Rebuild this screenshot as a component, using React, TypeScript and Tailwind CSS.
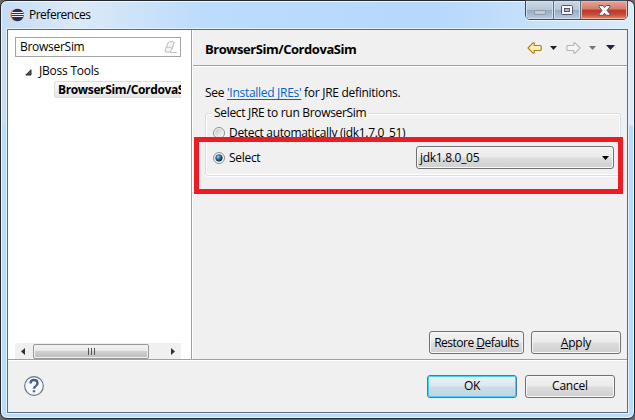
import React from "react";

function EclipseLogo() {
  return (
    <svg width="14" height="14" viewBox="0 0 14 14" className="shrink-0">
      <circle cx="6.5" cy="7" r="6.3" fill="#f59b2c" />
      <circle cx="7.6" cy="7" r="6.2" fill="#2f2a5c" />
      <path d="M2 4.5h11M1.5 6.5h12.5M2 8.5h11" stroke="#eeedf8" strokeWidth="1" />
    </svg>
  );
}

function BackArrow({ stroke, fill, flip }: { stroke: string; fill: string; flip?: boolean }) {
  return (
    <svg width="15" height="12" viewBox="0 0 15 12" className={flip ? "-scale-x-100" : ""}>
      <path d="M1 6 L6 .9 H7.2 V3.5 H13.2 L14.2 4.4 V7.7 L13.2 8.5 H7.2 V11.1 H6 Z" fill={fill} stroke={stroke} strokeWidth="1.1" strokeLinejoin="round" />
    </svg>
  );
}

function Caret({ color, big }: { color: string; big?: boolean }) {
  return big ? (
    <svg width="9" height="5" viewBox="0 0 9 5"><path d="M0 0h9L4.5 5z" fill={color} /></svg>
  ) : (
    <svg width="7" height="4" viewBox="0 0 7 4"><path d="M0 0h7L3.5 4z" fill={color} /></svg>
  );
}

function Radio({ checked }: { checked?: boolean }) {
  return (
    <svg width="12" height="12" viewBox="0 0 12 12" className="shrink-0">
      <defs>
        <linearGradient id="well" x1="0" y1="0" x2="1" y2="1">
          <stop offset="0" stopColor="#c4c8cc" />
          <stop offset="1" stopColor="#f8f8f8" />
        </linearGradient>
        <radialGradient id="dot" cx=".35" cy=".3" r=".7">
          <stop offset="0" stopColor="#a5e2f5" />
          <stop offset=".45" stopColor="#2687ae" />
          <stop offset="1" stopColor="#0b2849" />
        </radialGradient>
      </defs>
      <circle cx="6" cy="6" r="5.5" fill="#f4f4f4" stroke="#8e8f8f" />
      <circle cx="6" cy="6" r="3.9" fill="url(#well)" />
      {checked && <circle cx="6" cy="6" r="3.3" fill="url(#dot)" stroke="#16374f" strokeWidth=".6" />}
    </svg>
  );
}

function Button({ children, className, focus }: { children: React.ReactNode; className: string; focus?: boolean }) {
  const look = focus
    ? "border-[#3c7fb1] bg-[linear-gradient(#eaf2f6_0%,#dce8ee_48%,#cbdce5_52%,#c3d5df_100%)] shadow-[inset_0_0_0_1px_#48d0f8]"
    : "border-[#707070] bg-[linear-gradient(#f2f2f2_0%,#ebebeb_48%,#dddddd_52%,#cfcfcf_100%)] shadow-[inset_0_0_0_1px_#f8f8f8]";
  return (
    <button className={`flex h-[23px] items-center justify-center rounded-[3px] border whitespace-nowrap ${look} ${className}`}>
      <span>{children}</span>
    </button>
  );
}

function WindowControls() {
  return (
    <div className="mr-[6px] flex h-5 w-[103px] overflow-hidden rounded-b-[5px] border border-[#3f4b5c] shadow-[0_1px_0_#e9f5ff]">
      <div className="flex w-[28px] justify-center border-r border-[#5d6b7e] bg-[linear-gradient(#cbd7e5_0%,#b8c7d8_47%,#97a9bf_50%,#b6cce4_100%)] shadow-[inset_0_0_0_1px_#d4e0ed]">
        <div className="mt-[9px] h-[5px] w-3 rounded-[1px] border border-[#8e9baa] bg-[#c3ccd6]" />
      </div>
      <div className="flex w-[27px] justify-center border-r border-[#5d6b7e] bg-[linear-gradient(#cbd7e5_0%,#b8c7d8_47%,#97a9bf_50%,#b6cce4_100%)] shadow-[inset_0_0_0_1px_#d4e0ed]">
        <svg width="12" height="10" viewBox="0 0 12 10" className="mt-1">
          <rect x=".5" y=".5" width="11" height="9" rx="1" fill="#f6f7f8" stroke="#535666" />
          <rect x="3.5" y="3.5" width="5" height="3" fill="#a7bed5" stroke="#535666" />
        </svg>
      </div>
      <div className="flex flex-1 justify-center bg-[linear-gradient(#e5a596_0%,#d67c6a_45%,#ba382a_50%,#c84b35_75%,#e58d6c_100%)] shadow-[inset_0_0_0_1px_#e9b8a9]">
        <svg width="13" height="11" viewBox="0 0 13 11" className="mt-1">
          <path d="M1 .5h3.7l1.8 2L8.3.5H12v1.3L9 5.4l3 3.5v1.4H8.3l-1.8-2-1.8 2H1V8.9l3-3.5-3-3.6z" fill="#fafafa" stroke="#535666" strokeLinejoin="round" />
        </svg>
      </div>
    </div>
  );
}

function Sidebar() {
  return (
    <aside className="flex h-full w-[184px] flex-col border-r border-[#a0a0a0] bg-white pt-[7px] pr-[9px] pl-[7px]">
      <div className="flex h-5 w-[166px] shrink-0 items-center justify-between border border-[#a3a3a3] pr-[2px] pl-1">
        <span className="tracking-[-0.28px]">BrowserSim</span>
        <svg width="14" height="13" viewBox="0 0 14 13">
          <path d="M5.5.8h4.2q.9 0 .5.9L7.3 9.4 6 11H2Q.7 10.7 1 9.5L4.2 1.8Q4.5.8 5.5.8Z" fill="#f4f4f4" stroke="#bcbcbc" />
          <path d="M2.2 6.4h5.4M7.3 9.4 10 2" fill="none" stroke="#c7c7c7" />
          <path d="M6 11.5h7" stroke="#c4c4c4" />
        </svg>
      </div>
      <div className="mt-[5px] flex h-[18px] items-center pl-[10px]">
        <svg width="7" height="7" viewBox="0 0 7 7" className="mt-[2px]"><path d="M6 .8V6H.8z" fill="#595959" stroke="#262626" /></svg>
        <span className="ml-[7px] tracking-[-0.22px]">JBoss Tools</span>
      </div>
      <div className="mt-px ml-[39px] flex h-[17px] w-[127px] shrink-0 items-center overflow-hidden rounded-l-[3px] border border-r-0 border-[#dedede] bg-[linear-gradient(#fafafa,#e7e7e7)] pl-[3px]">
        <span className="font-bold tracking-[-0.36px] whitespace-nowrap">BrowserSim/CordovaSim</span>
      </div>
      <div className="mt-auto flex h-4 w-[166px] items-center bg-[#f0f0f0]">
        <svg width="18" height="15" viewBox="0 0 18 15"><path d="M10 4v7L6 7.5z" fill="#303030" /></svg>
        <div className="flex h-[15px] w-[116px] items-center justify-center gap-[2px] rounded-[2px] border border-[#979797] bg-[linear-gradient(#f4f4f4_0%,#e8e8e8_46%,#d0d0d2_50%,#bcbcc0_100%)] shadow-[inset_0_0_0_1px_#f2f2f2]">
          <i className="h-[7px] w-px bg-[#555]" />
          <i className="h-[7px] w-px bg-[#555]" />
          <i className="h-[7px] w-px bg-[#555]" />
        </div>
        <svg width="32" height="15" viewBox="0 0 32 15"><path d="M22 4v7l4-3.5z" fill="#303030" /></svg>
      </div>
    </aside>
  );
}

function PageHeader() {
  return (
    <header className="flex h-9 shrink-0 items-center border-b border-[#a0a0a0] pl-3 shadow-[0_1px_0_#fff]">
      <h1 className="pt-[2px] text-[13px] font-bold tracking-[-0.45px]">BrowserSim/CordovaSim</h1>
      <div className="mr-3 ml-auto flex items-center">
        <BackArrow stroke="#b77912" fill="#fff1ba" />
        <span className="ml-2"><Caret color="#202020" /></span>
        <span className="ml-[9px]"><BackArrow stroke="#b5b5b5" fill="#f5f5f5" flip /></span>
        <span className="ml-2"><Caret color="#747474" /></span>
        <span className="ml-[10px]"><Caret color="#2c1a4a" big /></span>
      </div>
    </header>
  );
}

function JreGroup() {
  return (
    <section className="relative mt-[12px] ml-3 h-[63px] w-[416px] rounded-[3px] border border-[#d5dfe5] shadow-[inset_0_0_0_1px_#fff,0_1px_0_#fff]">
      <span className="absolute top-[-9px] left-[6px] bg-[#f0f0f0] px-[2px] leading-4 tracking-[-0.32px] whitespace-nowrap">Select JRE to run BrowserSim</span>
      <div className="flex h-4 translate-y-[11px] items-center gap-1 pl-[7px]">
        <Radio />
        <span className="tracking-[-0.33px] whitespace-nowrap">Detect automatically (jdk1.7.0_51)</span>
      </div>
      <div className="mt-4 flex h-[23px] items-center gap-1 pl-[7px]">
        <Radio checked />
        <span className="tracking-[-0.3px]">Select</span>
        <div className="mr-[6px] ml-auto flex h-[23px] w-[198px] items-center justify-between rounded-[3px] border border-[#707070] bg-[linear-gradient(#f2f2f2_0%,#ebebeb_48%,#dddddd_52%,#cfcfcf_100%)] pr-1 pl-[3px] shadow-[inset_0_0_0_1px_#f8f8f8]">
          <span className="tracking-[-0.3px]">jdk1.8.0_05</span>
          <Caret color="#000" />
        </div>
      </div>
      <div className="absolute top-[23px] -left-3 h-[57px] w-[429px] border-[5px] border-[#ed1c24]" />
    </section>
  );
}

export default function App() {
  return (
    <div className="h-[420px] w-[635px] overflow-hidden bg-[#6c6563] font-['Open_Sans','Noto_Sans',sans-serif] text-[12px] leading-4 text-black">
      <div className="flex h-[419px] w-full flex-col rounded-[7px] border border-[#23262b] bg-[linear-gradient(180deg,transparent_0%,transparent_124px,#badcfb_125px),linear-gradient(90deg,#c4ddf5_0%,#dce9f6_12%,#bcdcfb_32%,#b5d8fb_68%,#c7e1fa_85%,#dcecfb_100%)] shadow-[inset_0_0_0_1px_#edf8ff]">
        <div className="flex h-7 shrink-0 items-start pl-[9px]">
          <div className="flex h-[28px] items-center gap-[5px]">
            <EclipseLogo />
            <span className="tracking-[-0.5px]">Preferences</span>
          </div>
          <div className="-mt-px ml-auto"><WindowControls /></div>
        </div>
        <main className="ml-[6px] flex h-[384px] w-[621px] flex-col border border-[#5c6c7c] bg-[#f0f0f0] shadow-[0_0_0_1px_#e2f2ff]">
          <div className="flex h-[330px] shrink-0 border-b border-[#a0a0a0] shadow-[0_1px_0_#fff]">
            <Sidebar />
            <div className="flex h-full min-w-0 flex-1 flex-col border-l border-white">
              <PageHeader />
              <p className="mt-[19px] ml-3 tracking-[-0.29px]">See <span className="text-[#0066cc] underline underline-offset-2">'Installed JREs'</span> for JRE definitions.</p>
              <JreGroup />
              <div className="mt-auto mb-[5px] flex justify-end gap-[7px] pr-[6px]">
                <Button className="w-[95px] tracking-[-0.5px]">Restore <u>D</u>efaults</Button>
                <Button className="w-[90px] tracking-[-0.2px]"><u>A</u>pply</Button>
              </div>
            </div>
          </div>
          <footer className="flex flex-1 items-center pr-3 pl-4">
            <svg width="20" height="20" viewBox="0 0 20 20">
              <circle cx="10" cy="10" r="9.3" fill="#f7f8fa" stroke="#64758e" strokeWidth="1.2" />
              <path d="M6.5 7.5Q6.5 4 10 4t3.5 3.2q0 1.6-1.6 2.7Q10 11 10 12.8" fill="none" stroke="#455f8d" strokeWidth="2.3" />
              <path d="M8.8 14.3h2.4v2H8.8z" fill="#455f8d" />
            </svg>
            <div className="ml-auto flex gap-2">
              <Button focus className="w-[90px] tracking-[-0.3px]">OK</Button>
              <Button className="w-[90px] tracking-[-0.2px]">Cancel</Button>
            </div>
          </footer>
        </main>
      </div>
    </div>
  );
}
